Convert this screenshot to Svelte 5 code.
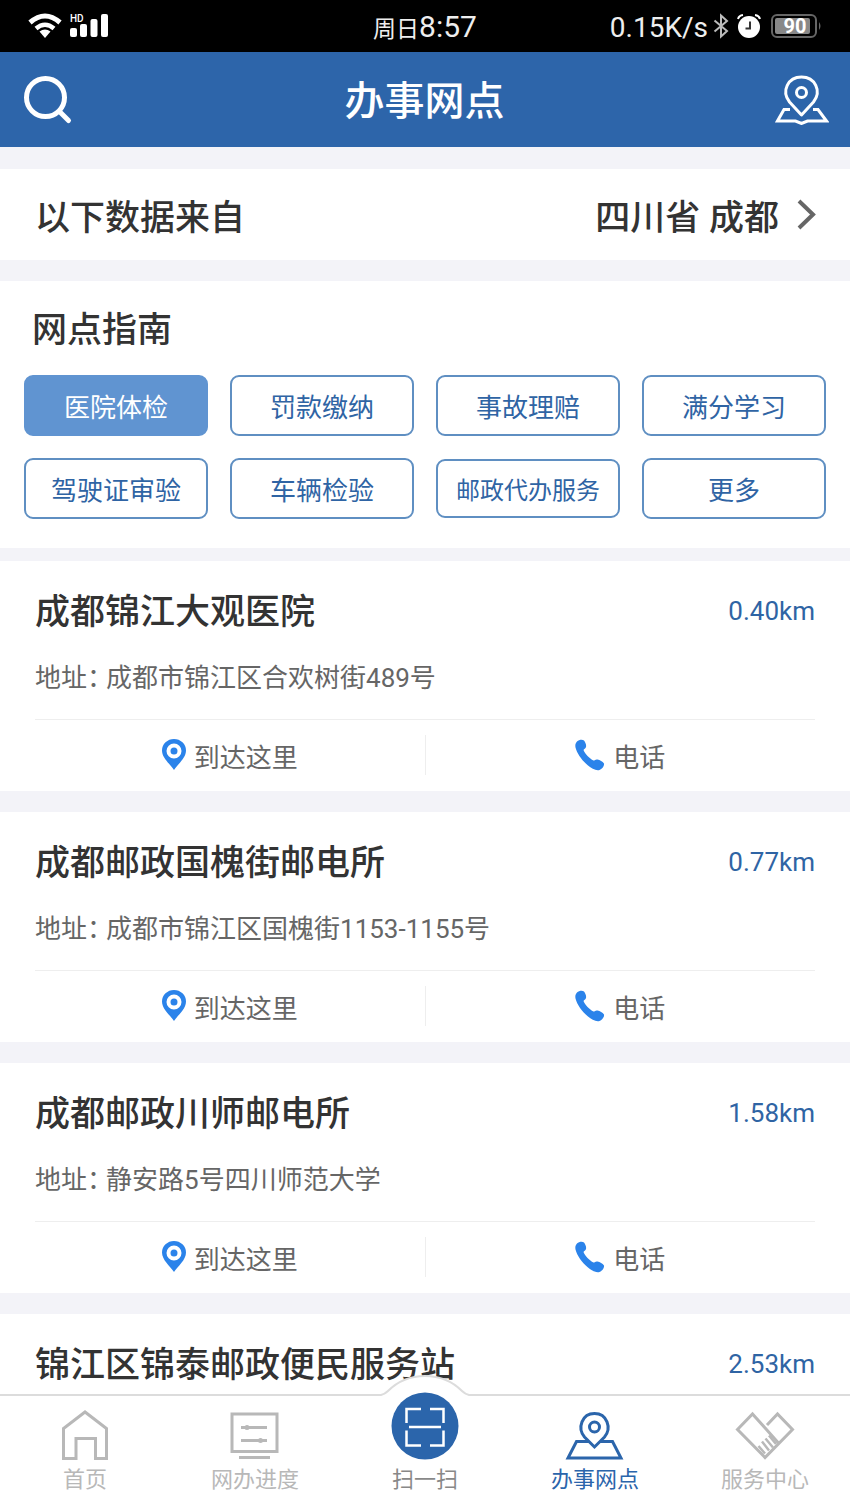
<script>
  const services = [
    '医院体检', '罚款缴纳', '事故理赔', '满分学习',
    '驾驶证审验', '车辆检验', '邮政代办服务', '更多'
  ];

  const branches = [
    { name: '成都锦江大观医院', distance: '0.40km', address: '成都市锦江区合欢树街489号' },
    { name: '成都邮政国槐街邮电所', distance: '0.77km', address: '成都市锦江区国槐街1153-1155号' },
    { name: '成都邮政川师邮电所', distance: '1.58km', address: '静安路5号四川师范大学' },
    { name: '锦江区锦泰邮政便民服务站', distance: '2.53km' }
  ];

  const tabs = [
    { id: 'home', label: '首页' },
    { id: 'progress', label: '网办进度' },
    { id: 'scan', label: '扫一扫' },
    { id: 'branches', label: '办事网点' },
    { id: 'center', label: '服务中心' }
  ];

  let selected = '医院体检';
  let activeTab = 'branches';
</script>

<div class="app">
  <!-- Status bar -->
  <div class="status-bar">
    <div class="status-left">
      <svg viewBox="0 0 34 26" width="34" height="26" fill="none" stroke="#fff" aria-hidden="true">
        <path d="M2 9.500Q17 -3.500 32 9.500" stroke-width="5"></path>
        <path d="M8 15.500Q17 8 26 15.500" stroke-width="4.500"></path>
        <path d="M11.500 18.500Q17 14.500 22.500 18.500L17 25Z" fill="#fff" stroke="none"></path>
      </svg>
      <svg viewBox="0 0 38 26" width="38" height="26" fill="#fff" aria-hidden="true">
        <text x="0" y="9" class="hd">HD</text>
        <rect x="0" y="15" width="7" height="9" rx="2"></rect>
        <rect x="10" y="11" width="7" height="13" rx="2"></rect>
        <rect x="20.500" y="6" width="7" height="18" rx="2"></rect>
        <rect x="31" y="1" width="7" height="23" rx="2"></rect>
      </svg>
    </div>
    <div class="clock"><span class="weekday">周日</span>8:57</div>
    <div class="status-right">
      <span class="speed">0.15K/s</span>
      <svg viewBox="0 0 16 26" width="16" height="26" fill="none" stroke="#bbb" stroke-width="2" aria-hidden="true">
        <path d="M1.500 7.500L14 18L8 23.500V2.500L14 8L1.500 18.500"></path>
      </svg>
      <svg class="alarm" viewBox="0 0 24 26" width="24" height="26" aria-hidden="true">
        <circle cx="12" cy="14" r="11" fill="#fff"></circle>
        <path d="M1 6Q2 2.500 6 2M23 6Q22 2.500 18 2" fill="none" stroke="#fff" stroke-width="2"></path>
        <path d="M13 8.500V15.500H8.500" fill="none" stroke="#333" stroke-width="2"></path>
      </svg>
      <svg viewBox="0 0 51 26" width="51" height="26" aria-hidden="true">
        <rect x="1" y="2" width="44" height="22" rx="5" fill="none" stroke="#666" stroke-width="2"></rect>
        <rect x="4" y="5" width="35" height="16" rx="2" fill="#888"></rect>
        <path d="M48 9Q51 13 48 17Z" fill="#666"></path>
        <text x="24" y="20" text-anchor="middle" class="level">90</text>
      </svg>
    </div>
  </div>

  <!-- Header -->
  <header class="header">
    <button class="icon-btn" aria-label="搜索">
      <svg viewBox="0 0 50 50" width="50" height="50" fill="none" stroke="#fff" stroke-linecap="round" aria-hidden="true">
        <circle cx="21.500" cy="22.500" r="19" stroke-width="5"></circle>
        <path d="M36 37L44.500 45.500" stroke-width="5"></path>
      </svg>
    </button>
    <h1>办事网点</h1>
    <button class="icon-btn" aria-label="地图">
      <svg viewBox="0 0 54 50" width="54" height="50" fill="none" stroke="#fff" stroke-width="3" aria-hidden="true">
        <path d="M26.500 40L14.500 27C6 16 13 2 26.500 2S47 16 38.500 27Z" stroke-linejoin="round"></path>
        <circle cx="26.500" cy="17.500" r="5"></circle>
        <path d="M15 34.500H9L2.500 46H20.500L26.500 48.500L32.500 46H51.500L43 34.500H38"></path>
      </svg>
    </button>
  </header>

  <main class="content">
    <button class="region">
      <span>以下数据来自</span>
      <span class="region-value">
        四川省 成都
        <svg viewBox="0 0 20 32" width="20" height="32" fill="none" stroke="#666" stroke-width="4" aria-hidden="true">
          <path d="M2 2L16 15.500L2 29"></path>
        </svg>
      </span>
    </button>

    <section class="guide">
      <h2>网点指南</h2>
      <div class="service-grid">
        {#each services as service}
          <button
            class="service"
            class:selected={selected === service}
            class:compact={service.length > 5}
            on:click={() => (selected = service)}
          >{service}</button>
        {/each}
      </div>
    </section>

    <!-- Branch list -->
    <div class="branch-list">
      {#each branches as branch}
        <article class="branch">
          <div class="branch-head">
            <h3>{branch.name}</h3>
            <span class="distance">{branch.distance}</span>
          </div>
          {#if branch.address}
            <p class="address"><span class="address-label">地址：</span>{branch.address}</p>
            <div class="actions">
              <button class="action">
                <svg viewBox="0 0 24 32" width="24" height="32" aria-hidden="true">
                  <path d="M12 31C8 25 0 19 0 11.500A12 11.500 0 0 1 24 11.500C24 19 16 25 12 31Z" fill="#2b83ea"></path>
                  <circle cx="12" cy="12" r="5.500" fill="#2b83ea" stroke="#fff" stroke-width="4"></circle>
                </svg>
                到达这里
              </button>
              <button class="action">
                <svg viewBox="0 0 30 32" width="30" height="32" aria-hidden="true">
                  <path d="M2 2.500C4 0.500 7.500 0 9 1.500C10.500 3.500 11.500 6 11 8C10.500 9.500 9 10 8.500 11C10 15 14.500 19.500 18.500 21.500C20 21.500 20.500 20 22.500 20.500C25 21 27.500 22.500 29 24.500C29.500 27 27 30 24.500 31C21 32 16.500 29.500 13 26.500C7 21.500 2 14.500 0.500 8.500C0 6 0.500 4 2 2.500Z" fill="#2b83ea"></path>
                </svg>
                电话
              </button>
            </div>
          {/if}
        </article>
      {/each}
    </div>
  </main>

  <!-- Tab bar -->
  <nav class="tab-bar">
    <svg class="bump" viewBox="0 0 92 24" width="92" height="24" aria-hidden="true">
      <path d="M0 21H2Q6 21 9 17Q24 2 46 2T83 17Q86 21 90 21H92V24H0Z" fill="#fff"></path>
      <path d="M0 21H2Q6 20 9 17Q24 2 46 2T83 17Q86 20 90 21H92" fill="none" stroke="#dcdcdc" stroke-width="2"></path>
    </svg>
    {#each tabs as tab}
      <button class="tab {tab.id}" class:active={activeTab === tab.id} on:click={() => (activeTab = tab.id)}>
        {#if tab.id === 'home'}
          <svg viewBox="0 0 50 50" width="50" height="50" fill="none" stroke="currentColor" stroke-width="3" aria-hidden="true">
            <path d="M25 2L3.500 18.500V48.500H16V28.500H35.500V48.500H46.500V18.500Z"></path>
          </svg>
        {:else if tab.id === 'progress'}
          <svg viewBox="0 0 50 50" width="50" height="50" fill="none" stroke="currentColor" stroke-width="3" aria-hidden="true">
            <path d="M2 4H47V41.500H2ZM9 47.500H40M11 17.500H37M11 30.500H37"></path>
            <circle cx="17" cy="17.500" r="2.500" fill="currentColor" stroke="none"></circle>
            <circle cx="30.500" cy="30.500" r="2.500" fill="currentColor" stroke="none"></circle>
          </svg>
        {:else if tab.id === 'scan'}
          <svg viewBox="0 0 68 68" width="68" height="68" aria-hidden="true">
            <circle cx="34" cy="34" r="33.500" fill="#2b65ab"></circle>
            <path d="M15.500 31V17H30M39 17H52.500V31M52.500 38.500V53.500H39M30 53.500H15.500V38.500M18 35H50" fill="none" stroke="#fff" stroke-width="2.500"></path>
          </svg>
        {:else if tab.id === 'branches'}
          <svg viewBox="0 0 60 50" width="60" height="50" fill="none" stroke="currentColor" stroke-width="3" aria-hidden="true">
            <path d="M29.500 37L19.500 27C12 18 17 3.500 29.500 3.500S47 18 39.500 27Z"></path>
            <circle cx="29.500" cy="17" r="5"></circle>
            <path d="M24 31.500H11.500L3 48H56L47.500 31.500H35"></path>
          </svg>
        {:else}
          <svg viewBox="0 0 60 50" width="60" height="50" fill="none" stroke="currentColor" stroke-width="3" aria-hidden="true">
            <path d="M43 32.500L17.500 4L2.500 19.500L30 47.500L57.500 19.500L42.500 4L32 15"></path>
            <path d="M23.500 36L30 43.500M27 31.500L34 40.500M30.500 28.500L38 37.500M34 25.500L41 34" stroke-width="2.500"></path>
          </svg>
        {/if}
        <span>{tab.label}</span>
      </button>
    {/each}
  </nav>
</div>

<style>
  :global(body) {
    margin: 0;
    background: #f3f3f8;
  }

  .app {
    display: flex;
    flex-direction: column;
    height: 100vh;
    overflow: hidden;
    font-family: Roboto, "Noto Sans CJK SC", sans-serif;
    font-size: 26px;
    color: #333;
  }

  button {
    font: inherit;
    color: inherit;
    background: none;
    border: none;
    padding: 0;
    margin: 0;
    cursor: pointer;
  }

  svg {
    display: block;
    flex-shrink: 0;
  }

  h1, h2, h3, p {
    margin: 0;
  }

  .status-bar {
    display: grid;
    grid-template-columns: 1fr auto 1fr;
    align-items: center;
    height: 52px;
    flex-shrink: 0;
    padding: 0 28px;
    background: #000;
    color: #eee;
  }

  .status-left, .status-right {
    display: flex;
    align-items: center;
    gap: 8px;
  }

  .status-right {
    justify-content: flex-end;
    gap: 5px;
  }

  .alarm {
    margin: 0 5px 0 3px;
  }

  .hd {
    font-size: 10px;
    font-weight: 500;
  }

  .clock {
    padding-top: 4px;
    font-size: 30px;
    line-height: 40px;
  }

  .weekday {
    font-size: 23px;
  }

  .speed {
    padding-top: 2px;
    font-size: 28px;
  }

  .level {
    font-size: 20px;
    font-weight: 700;
    fill: #fff;
  }

  .header {
    display: flex;
    align-items: center;
    justify-content: space-between;
    height: 95px;
    flex-shrink: 0;
    padding: 0 21px 0 24px;
    background: #2d65aa;
    color: #fff;
  }

  h1 {
    padding-top: 4px;
    font-size: 40px;
    font-weight: 500;
    line-height: 48px;
  }

  .content {
    flex: 1;
    min-height: 0;
    overflow-y: auto;
    scrollbar-width: none;
  }

  .region {
    display: flex;
    align-items: center;
    justify-content: space-between;
    width: 100%;
    height: 91px;
    margin: 22px 0 21px;
    padding: 0 33px 0 35px;
    background: #fff;
    font-size: 35px;
    font-weight: 500;
  }

  .region-value {
    display: flex;
    align-items: center;
    gap: 18px;
  }

  .guide {
    padding: 28px 24px 29px;
    background: #fff;
  }

  h2 {
    padding-left: 8px;
    font-size: 35px;
    font-weight: 500;
    line-height: 44px;
  }

  .service-grid {
    display: grid;
    grid-template-columns: repeat(4, 1fr);
    align-items: center;
    gap: 22px;
    margin-top: 22px;
  }

  .service {
    height: 61px;
    border: 2px solid #5f8fc2;
    border-radius: 9px;
    color: #2f64a4;
  }

  .service.selected {
    background: #6094d1;
    border-color: #6094d1;
    color: #fff;
  }

  .service.compact {
    height: 59px;
    font-size: 24px;
  }

  .branch-list {
    display: flex;
    flex-direction: column;
    gap: 21px;
    margin-top: 13px;
  }

  .branch {
    box-sizing: border-box;
    min-height: 230px;
    padding: 30px 35px 0;
    background: #fff;
  }

  .branch-head {
    display: flex;
    align-items: flex-start;
    justify-content: space-between;
  }

  h3 {
    font-size: 35px;
    font-weight: 500;
    line-height: 44px;
  }

  .distance {
    line-height: 40px;
    color: #2f64a4;
  }

  .address {
    margin-top: 25px;
    line-height: 36px;
    color: #666;
  }

  .address-label {
    margin-right: 6px;
    font-feature-settings: "halt";
  }

  .actions {
    display: flex;
    align-items: center;
    height: 70px;
    margin-top: 23px;
    border-top: 1px solid #eee;
  }

  .action {
    display: flex;
    flex: 1;
    align-items: center;
    justify-content: center;
    gap: 8px;
    height: 40px;
    color: #666;
  }

  .action + .action {
    border-left: 1px solid #eee;
  }

  .tab-bar {
    position: relative;
    display: flex;
    height: 115px;
    flex-shrink: 0;
    border-top: 2px solid #dcdcdc;
    background: #fff;
  }

  .bump {
    position: absolute;
    top: -22px;
    left: 50%;
    transform: translateX(-50%);
  }

  .tab {
    position: relative;
    display: flex;
    flex: 1;
    flex-direction: column;
    align-items: center;
    justify-content: flex-end;
    gap: 5px;
    padding-bottom: 16px;
    font-size: 22px;
    line-height: 30px;
    color: #b8b8b8;
  }

  .tab.scan {
    color: #888;
  }

  .tab.active {
    color: #2b65ab;
  }
</style>
